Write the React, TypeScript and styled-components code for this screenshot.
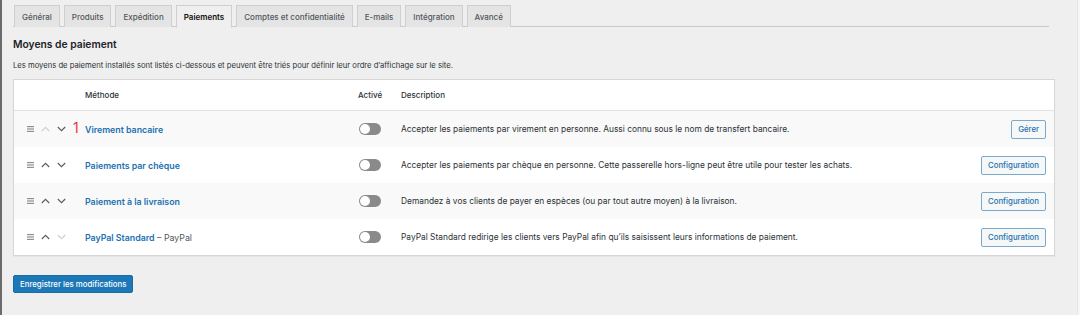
import React from "react";
import styled, { createGlobalStyle } from "styled-components";

const Global = createGlobalStyle`
  html, body { margin: 0; padding: 0; background: #efefef; }
  body { font-family: Inter, "Noto Sans", "Liberation Sans", sans-serif; color: #1d2327; }
  * { box-sizing: border-box; }
`;

const Frame = styled.div`
  display: flex;
  width: 1080px;
  height: 315px;
  overflow: hidden;
`;

const LeftEdge = styled.div`
  width: 2px;
  background: #6b6b6b;
  flex: none;
`;

const Main = styled.div`
  flex: 1;
  padding: 5px 0 0 11px;
  background: #efefef;
`;

const RightEdge = styled.div`
  width: 3px;
  background: #f6f6f6;
  border-left: 1px solid #e6e6e6;
  flex: none;
`;

const TabBar = styled.nav`
  display: flex;
  gap: 4px;
  width: 1036px;
  border-bottom: 1px solid #c9c9c9;
  padding-left: 1px;
  height: 22px;
`;

const Tab = styled.div<{ $active?: boolean }>`
  padding: 0 7px;
  display: flex;
  align-items: center;
  font-size: 8px;
  font-weight: ${(p) => (p.$active ? 600 : 500)};
  color: ${(p) => (p.$active ? "#111" : "#50575e")};
  background: ${(p) => (p.$active ? "#efefef" : "#e4e4e4")};
  border: 1px solid #cfcfcf;
  border-bottom: ${(p) => (p.$active ? "1px solid #efefef" : "none")};
  margin-bottom: ${(p) => (p.$active ? "-1px" : "0")};
  height: ${(p) => (p.$active ? "23px" : "22px")};
`;

const Heading = styled.h2`
  margin: 10px 0 0 0;
  font-size: 10.3px;
  font-weight: 600;
  color: #1d2327;
  line-height: 14px;
`;

const Intro = styled.p`
  margin: 10px 0 0 0;
  font-size: 7.65px;
  color: #2c3338;
  line-height: 10px;
`;

const Table = styled.div`
  margin: 8px 0 0 0;
  width: 1042px;
  background: #fff;
  border: 1px solid #d6d6d6;
  box-shadow: 0 1px 1px rgba(0, 0, 0, 0.04);
`;

const cols = "71px 273px 43px 1fr auto";

const HeadRow = styled.div`
  display: grid;
  grid-template-columns: ${cols};
  height: 31px;
  align-items: center;
  border-bottom: 1px solid #e3e3e3;
  font-size: 8px;
  font-weight: 500;
  color: #2c3338;
`;

const Row = styled.div<{ $alt?: boolean }>`
  display: grid;
  grid-template-columns: ${cols};
  height: 36px;
  align-items: center;
  background: ${(p) => (p.$alt ? "#f9f9f9" : "#fff")};
  font-size: 8px;
  padding-right: 8px;
`;

const Sort = styled.div`
  display: flex;
  align-items: center;
  padding-left: 13px;
  gap: 7px;
  position: relative;
  height: 100%;
`;

const Marker = styled.span`
  position: absolute;
  left: 59px;
  top: 9px;
  color: #e8353f;
  font-size: 14px;
  line-height: 16px;
  font-weight: 400;
`;

const MethodName = styled.div`
  font-size: 8.8px;
  font-weight: 600;
  color: #2271b1;
`;

const Sub = styled.span`
  font-weight: 400;
  color: #50575e;
`;

const Toggle = styled.div`
  width: 22px;
  height: 12px;
  border-radius: 6px;
  background: #8a8a8a;
  position: relative;
  margin-left: 1px;
  &::after {
    content: "";
    position: absolute;
    left: 1px;
    top: 1px;
    width: 10px;
    height: 10px;
    border-radius: 50%;
    background: #fff;
  }
`;

const Desc = styled.div`
  font-size: 8.4px;
  color: #2c3338;
`;

const Btn = styled.button`
  font-family: inherit;
  font-size: 7.8px;
  font-weight: 500;
  color: #2271b1;
  background: #f6f7f7;
  border: 1px solid #7aa9cf;
  border-radius: 2px;
  height: 19px;
  padding: 0 6px;
`;

const HeadCell = styled.div``;

const SaveBtn = styled.button`
  margin: 19px 0 0 0;
  font-family: inherit;
  font-size: 7.8px;
  font-weight: 500;
  color: #fff;
  background: #1c78b6;
  border: 1px solid #1a6ca6;
  border-radius: 2px;
  height: 18px;
  padding: 0 6px;
`;

const Handle = () => (
  <svg width="7" height="6" viewBox="0 0 7 6">
    <rect x="0" y="0" width="7" height="1.2" fill="#8c8f94" />
    <rect x="0" y="2.4" width="7" height="1.2" fill="#8c8f94" />
    <rect x="0" y="4.8" width="7" height="1.2" fill="#8c8f94" />
  </svg>
);

const Chevron = ({ up, disabled }: { up?: boolean; disabled?: boolean }) => (
  <svg width="9" height="6" viewBox="0 0 9 6">
    <path
      d={up ? "M0.8 5 L4.5 1.3 L8.2 5" : "M0.8 1 L4.5 4.7 L8.2 1"}
      fill="none"
      stroke={disabled ? "#d0d0d0" : "#5a5f64"}
      strokeWidth="1.2"
    />
  </svg>
);

type Method = {
  name: string;
  sub?: string;
  desc: string;
  btn: string;
  upDisabled?: boolean;
  downDisabled?: boolean;
  marker?: boolean;
};

const methods: Method[] = [
  {
    name: "Virement bancaire",
    desc: "Accepter les paiements par virement en personne. Aussi connu sous le nom de transfert bancaire.",
    btn: "Gérer",
    upDisabled: true,
    marker: true,
  },
  {
    name: "Paiements par chèque",
    desc: "Accepter les paiements par chèque en personne. Cette passerelle hors-ligne peut être utile pour tester les achats.",
    btn: "Configuration",
  },
  {
    name: "Paiement à la livraison",
    desc: "Demandez à vos clients de payer en espèces (ou par tout autre moyen) à la livraison.",
    btn: "Configuration",
  },
  {
    name: "PayPal Standard",
    sub: "PayPal",
    desc: "PayPal Standard redirige les clients vers PayPal afin qu’ils saisissent leurs informations de paiement.",
    btn: "Configuration",
    downDisabled: true,
  },
];

const tabs = [
  "Général",
  "Produits",
  "Expédition",
  "Paiements",
  "Comptes et confidentialité",
  "E-mails",
  "Intégration",
  "Avancé",
];

export default function App() {
  return (
    <>
      <Global />
      <Frame>
        <LeftEdge />
        <Main>
          <TabBar>
            {tabs.map((t) => (
              <Tab key={t} $active={t === "Paiements"}>
                {t}
              </Tab>
            ))}
          </TabBar>
          <Heading>Moyens de paiement</Heading>
          <Intro>
            Les moyens de paiement installés sont listés ci-dessous et peuvent être triés pour définir
            leur ordre d’affichage sur le site.
          </Intro>
          <Table>
            <HeadRow>
              <HeadCell />
              <HeadCell>Méthode</HeadCell>
              <HeadCell>Activé</HeadCell>
              <HeadCell>Description</HeadCell>
              <HeadCell />
            </HeadRow>
            {methods.map((m, i) => (
              <Row key={m.name} $alt={i % 2 === 0}>
                <Sort>
                  <Handle />
                  <Chevron up disabled={m.upDisabled} />
                  <Chevron disabled={m.downDisabled} />
                  {m.marker && <Marker>1</Marker>}
                </Sort>
                <MethodName>
                  {m.name}
                  {m.sub && <Sub> – {m.sub}</Sub>}
                </MethodName>
                <div>
                  <Toggle />
                </div>
                <Desc>{m.desc}</Desc>
                <Btn>{m.btn}</Btn>
              </Row>
            ))}
          </Table>
          <SaveBtn>Enregistrer les modifications</SaveBtn>
        </Main>
        <RightEdge />
      </Frame>
    </>
  );
}
